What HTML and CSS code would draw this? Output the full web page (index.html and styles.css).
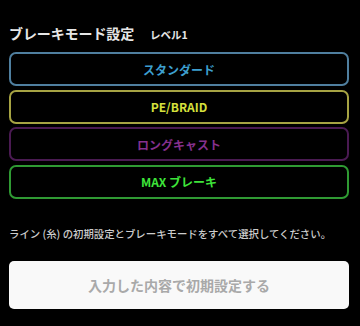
FILE: index.html
```html
<!DOCTYPE html>
<html lang="ja">
<head>
    <meta charset="utf-8"/>
    <title>ブレーキモード設定</title>
    <link rel="stylesheet" href="styles.css">
</head>
<body>
    <div class="container">
        <div class="header">
            <h2>ブレーキモード設定</h2>
            <span class="level">レベル1</span>
        </div>
        <div class="modes">
            <button class="mode mode-standard">スタンダード</button>
            <button class="mode mode-pe">PE/BRAID</button>
            <button class="mode mode-long">ロングキャスト</button>
            <button class="mode mode-max">MAX ブレーキ</button>
        </div>
        <p class="note">ライン (糸) の初期設定とブレーキモードをすべて選択してください。</p>
        <button class="submit-btn" disabled>入力した内容で初期設定する</button>
    </div>
</body>
</html>
```

FILE: styles.css
```css
html, body {
    margin: 0;
    padding: 0;
    background-color: #000000;
    font-family: "Noto Sans CJK JP", "Noto Sans", sans-serif;
    color: #e4e4e4;
}
.container {
    padding: 24px 11px 0 9px;
    display: flex;
    flex-direction: column;
}
.header {
    display: flex;
    align-items: baseline;
    gap: 16px;
    height: 18px;
    margin-bottom: 10px;
}
.header h2 {
    margin: 0;
    font-size: 14px;
    line-height: 18px;
    font-weight: 700;
    letter-spacing: -0.1px;
    color: #e6e6e6;
}
.level {
    font-size: 10.5px;
    font-weight: 700;
    color: #e6e6e6;
}
.modes {
    display: flex;
    flex-direction: column;
    gap: 3.5px;
}
.mode {
    height: 34px;
    background: #000000;
    border: 2px solid;
    border-radius: 7px;
    font-family: inherit;
    font-size: 12px;
    font-weight: 700;
    cursor: pointer;
    padding: 0;
}
.mode-standard {
    border-color: #4f7f9f;
    color: #3d9fcf;
}
.mode-pe {
    border-color: #a6a343;
    color: #d6e03c;
}
.mode-long {
    border-color: #4a1a52;
    color: #86308e;
}
.mode-max {
    border-color: #2f9a33;
    color: #3ee43a;
}
.note {
    margin: 28px 0 20px;
    font-size: 10.4px;
    line-height: 14px;
    font-weight: 500;
    color: #cccccc;
    white-space: nowrap;
}
.submit-btn {
    height: 48px;
    background: #f9f9f9;
    border: none;
    border-radius: 5px;
    font-family: inherit;
    font-size: 14px;
    font-weight: 700;
    color: #a9a9a9;
    padding: 0;
}
```
